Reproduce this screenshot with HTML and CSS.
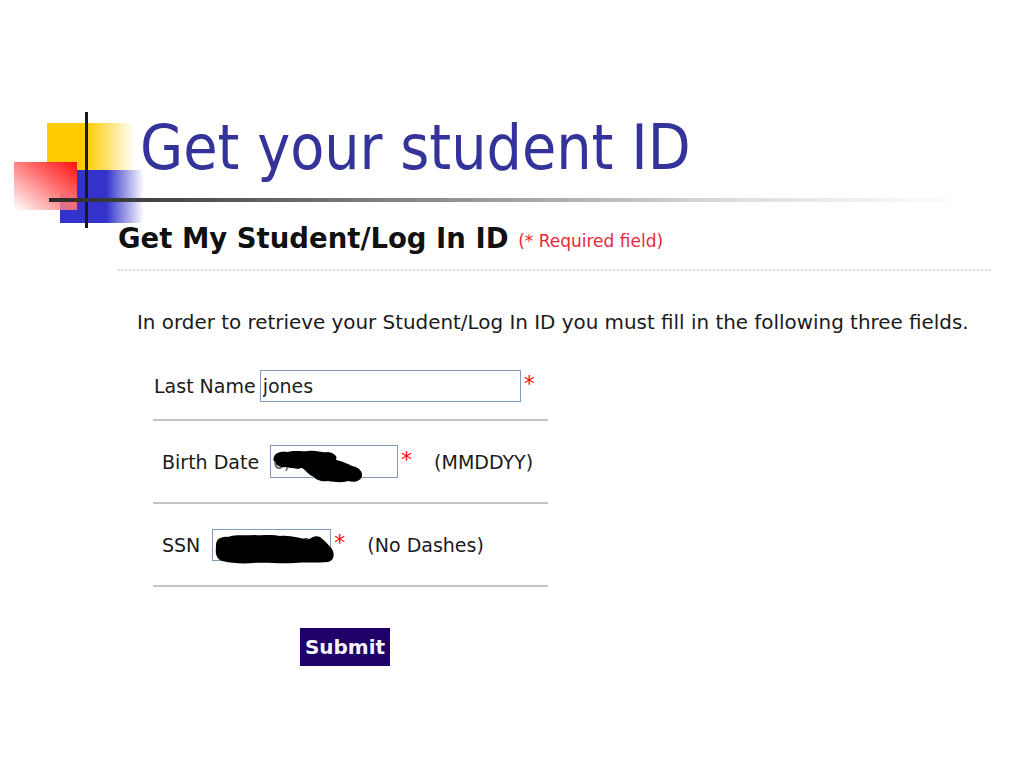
FILE: index.html
```html
<!DOCTYPE html>
<html lang="en">
<head>
    <meta charset="UTF-8">
    <meta name="viewport" content="width=device-width, initial-scale=1.0">
    <title>Get your student ID</title>
    <link rel="stylesheet" href="styles.css">
</head>
<body>
    <div class="slide">
        <!-- template logo: overlapping squares and crossing bar -->
        <div class="logo">
            <div class="sq-yellow"></div>
            <div class="sq-blue"></div>
            <div class="sq-red"></div>
            <div class="bar-v"></div>
        </div>

        <h1 class="title">Get your student ID</h1>
        <div class="rule"></div>

        <div class="shot">
            <h2 class="shot-head">Get My Student/Log In ID <span class="required">(* Required field)</span></h2>
            <div class="dots"></div>

            <p class="intro">In order to retrieve your Student/Log In ID you must fill in the following three fields.</p>

            <div class="form">
                <div class="form-row row-first">
                    <label class="label">Last Name</label>
                    <input class="field field-name" type="text" value="jones">
                    <span class="star">*</span>
                </div>
                <div class="form-row row-indent">
                    <label class="label">Birth Date</label>
                    <span class="field-wrap">
                        <input class="field field-date" type="text" value="0/0">
                        <svg class="scribble" width="100" height="36" viewBox="0 0 100 36">
                            <path d="M2 9 C3 4 10 3 16 4 C22 2 30 4 36 3 C44 2 50 5 56 4 C62 5 66 8 64 12 C70 13 76 16 80 18 C86 19 91 23 90 28 C89 33 82 35 76 33 C70 35 62 34 56 33 C50 34 44 32 42 29 C36 27 34 22 30 20 C24 21 18 20 14 19 C8 20 3 17 4 14 C1 13 1 11 2 9 Z" fill="#000"/>
                        </svg>
                    </span>
                    <span class="star">*</span>
                    <span class="hint">(MMDDYY)</span>
                </div>
                <div class="form-row row-indent">
                    <label class="label label-short">SSN</label>
                    <span class="field-wrap">
                        <input class="field field-ssn" type="text" value="000000000">
                        <svg class="scribble" width="122" height="34" viewBox="0 0 122 34">
                            <path d="M2 16 C1 9 6 4 14 5 C22 2 32 4 40 3 C50 4 58 2 66 4 C76 3 86 6 94 8 C98 5 102 3 106 5 C110 8 114 12 118 17 C121 22 120 29 114 30 C104 31 92 30 80 31 C66 32 52 30 40 31 C28 32 16 31 8 29 C3 27 1 22 2 16 Z" fill="#000"/>
                        </svg>
                    </span>
                    <span class="star">*</span>
                    <span class="hint">(No Dashes)</span>
                </div>
            </div>

            <div class="actions">
                <button class="submit">Submit</button>
            </div>
        </div>
    </div>
</body>
</html>
```

FILE: styles.css
```css
body {
    margin: 0;
    padding: 0;
    background-color: #fff;
    font-family: "DejaVu Sans", Verdana, sans-serif;
}

.slide {
    position: relative;
    width: 1024px;
    height: 768px;
    overflow: hidden;
    background-color: #fff;
}

/* logo */
.logo {
    position: absolute;
    left: 0;
    top: 0;
    width: 150px;
    height: 240px;
}

.logo div {
    position: absolute;
}

.sq-yellow {
    left: 47px;
    top: 123px;
    width: 88px;
    height: 47px;
    background: linear-gradient(to right, #ffcc00 0, #ffcc00 45%, rgba(255, 204, 0, 0) 100%);
}

.sq-blue {
    left: 60px;
    top: 170px;
    width: 84px;
    height: 53px;
    background: linear-gradient(to right, #3333cc 0, #3333cc 55%, rgba(51, 51, 204, 0) 100%);
}

.sq-red {
    left: 14px;
    top: 162px;
    width: 63px;
    height: 48px;
    background: linear-gradient(to bottom left, #ff1010 0, #ff6a6a 40%, rgba(255, 255, 255, 0.4) 100%);
}

.bar-v {
    left: 85px;
    top: 112px;
    width: 3px;
    height: 116px;
    background-color: #1a1a1a;
}

.title {
    margin: 0;
    padding: 112px 0 0 140px;
    font-family: "DejaVu Sans Condensed", "DejaVu Sans", sans-serif;
    font-size: 62px;
    font-weight: normal;
    line-height: 72px;
    color: #333399;
    position: relative;
}

.rule {
    position: relative;
    margin: 14px 0 0 49px;
    width: 915px;
    height: 4px;
    background: linear-gradient(to right, #2a2a2a 0, #888 40%, #ddd 75%, rgba(255, 255, 255, 0) 100%);
}

/* screenshot of the web form */
.shot {
    margin-left: 118px;
    width: 872px;
    color: #1a1a1a;
}

.shot-head {
    margin: 18px 0 0;
    font-size: 27.5px;
    font-weight: bold;
    line-height: 36px;
    color: #111;
}

.required {
    font-size: 17px;
    font-weight: normal;
    color: #e8283c;
    vertical-align: 1px;
}

.dots {
    margin-top: 10px;
    border-top: 2px dotted #dcdcdc;
}

.intro {
    margin: 40px 0 0 19px;
    font-size: 19.9px;
    line-height: 24px;
}

.form {
    margin: 22px 0 0 35px;
    width: 395px;
}

.form-row {
    display: flex;
    align-items: center;
    border-bottom: 2px solid #c4c4c4;
    font-size: 19px;
}

.row-first {
    height: 58px;
    padding: 0 0 4px 1px;
}

.row-indent {
    height: 81px;
    padding-left: 9px;
}

.label {
    margin-right: 4px;
}

.row-indent .label {
    margin-right: 11px;
}

.row-indent .label-short {
    margin-right: 12px;
}

.field {
    box-sizing: border-box;
    height: 32px;
    margin: 0;
    padding: 0 2px;
    border: 1px solid #7f9db9;
    font-family: inherit;
    font-size: 19px;
    color: #222;
    background-color: #fff;
}

.field-name {
    width: 261px;
}

.field-date {
    width: 128px;
    height: 33px;
    color: #666;
}

.field-ssn {
    width: 119px;
}

.field-wrap {
    position: relative;
    display: inline-block;
    line-height: 0;
}

.scribble {
    position: absolute;
    left: 2px;
    top: 3px;
}

.star {
    align-self: flex-start;
    margin-top: 15px;
    margin-left: 3px;
    font-size: 22px;
    line-height: 24px;
    color: #ff0000;
}

.row-indent .star {
    margin-top: 27px;
}

.hint {
    margin-left: 22px;
}

.actions {
    margin: 41px 0 0 182px;
}

.submit {
    width: 90px;
    height: 38px;
    padding: 0;
    border: none;
    background-color: #1e0068;
    color: #f4f4ff;
    font-family: inherit;
    font-size: 20px;
    font-weight: bold;
}
```
